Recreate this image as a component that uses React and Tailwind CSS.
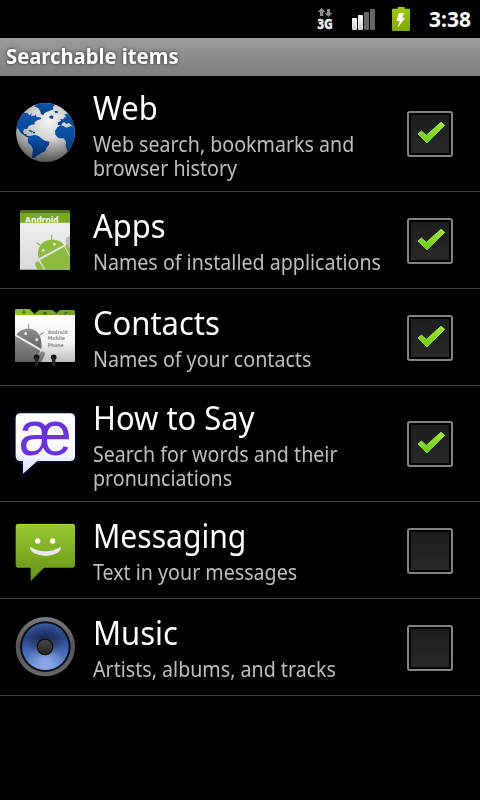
import React from "react";

function Network() {
  return (
    <svg className="h-[38px] w-[30px]" viewBox="30 0 90 114">
      <path d="M65 24 77 36H70V48H60V36H53Z" fill="#8e8e8e" />
      <path d="M81 27H90V39H97L85 51 74 39H81Z" fill="#8e8e8e" />
      <text x="52" y="87" fontSize="41" fontWeight="700" fill="#f2f2f2" stroke="#f2f2f2" strokeWidth="1.500" textLength="46" lengthAdjust="spacingAndGlyphs" className="font-['DejaVu_Sans',sans-serif]">3G</text>
    </svg>
  );
}

function Signal() {
  return (
    <svg className="h-[38px] w-[34px]" viewBox="138 0 102 114">
      <defs>
        <linearGradient id="bar" x1="0" y1="0" x2="0" y2="1">
          <stop offset="0" stopColor="#ffffff" />
          <stop offset="1" stopColor="#c9c9c9" />
        </linearGradient>
      </defs>
      <rect x="156" y="54" width="15" height="36" rx="2" fill="url(#bar)" />
      <rect x="174" y="45" width="15" height="45" rx="2" fill="url(#bar)" />
      <rect x="192" y="36" width="15" height="54" rx="2" fill="#666" />
      <rect x="210" y="27" width="15" height="63" rx="2" fill="#666" />
    </svg>
  );
}

function Battery() {
  return (
    <svg className="h-[38px] w-[26px]" viewBox="264 0 78 114">
      <defs>
        <linearGradient id="bat" x1="0" y1="0" x2="0" y2="1">
          <stop offset="0" stopColor="#a0cc00" />
          <stop offset="1" stopColor="#7ea600" />
        </linearGradient>
      </defs>
      <path d="M279 26H293V21H314V26H327Q330 26 330 29V90Q330 93 327 93H279Q276 93 276 90V29Q276 26 279 26Z" fill="url(#bat)" />
      <path d="M297 39H312L307 53H316L293 83 299 63H289Z" fill="#fff" />
    </svg>
  );
}

function Globe() {
  return (
    <svg className="h-[72px] w-[72px]" viewBox="27 21 216 216">
      <defs>
        <radialGradient id="sea" cx="0.56" cy="0.32" r="0.68">
          <stop offset="0" stopColor="#f4f4f4" />
          <stop offset="0.45" stopColor="#d2d2d2" />
          <stop offset="0.8" stopColor="#a4a4a4" />
          <stop offset="1" stopColor="#858585" />
        </radialGradient>
        <linearGradient id="land" x1="0" y1="0" x2="0" y2="1">
          <stop offset="0" stopColor="#0b55ad" />
          <stop offset="1" stopColor="#043f87" />
        </linearGradient>
        <linearGradient id="globeShade" x1="0" y1="0" x2="0" y2="1">
          <stop offset="0.6" stopColor="#000" stopOpacity="0" />
          <stop offset="1" stopColor="#000" stopOpacity="0.35" />
        </linearGradient>
        <clipPath id="disc"><circle cx="136.500" cy="127.500" r="88.500" /></clipPath>
      </defs>
      <circle cx="136.500" cy="127.500" r="88.500" fill="url(#sea)" />
      <g clipPath="url(#disc)" fill="url(#land)">
        <path d="M102 49 112 42 128 38H155L165 45 158 52 161 58 145 64 135 68 129 76 123 72 120 62 115 55Z" />
        <path d="M64 79 72 68 82 69 89 76 96 68 93 78 104 77 107 73 110 81 121 82 124 87 112 91 103 97 105 103 94 104 86 109 81 118 73 116 69 122 72 132 79 132 80 137 90 138 92 145 84 143 75 138 63 130 54 115 45 120V95Z" />
        <path d="M84 120 93 121 99 125 96 128 88 124ZM99 125H105V130H99Z" />
        <path d="M92 137 106 134 117 139 127 148 135 152 148 155 147 164 139 174 136 184 124 189 117 194 109 199 104 205 96 204 97 192 99 178 94 169 84 158 83 147Z" />
        <path d="M148 79 156 76 161 81 157 87 149 85ZM163 63 173 63 175 68 166 70Z" />
        <path d="M193 73 203 71 230 95V120L213 104 207 98 200 102 192 96 187 100 183 107 173 104 174 97 183 93 181 87 190 88 193 82 199 82Z" />
        <path d="M173 110 186 106 200 113 213 108 230 115V160L211 181 202 183 197 168 198 155 191 145H176L166 134 165 123Z" />
      </g>
      <circle cx="136.500" cy="127.500" r="88.500" fill="url(#globeShade)" />
    </svg>
  );
}

function AppsIcon() {
  return (
    <svg className="h-[72px] w-[72px]" viewBox="27 27 216 216">
      <defs>
        <linearGradient id="paper" x1="0" y1="0" x2="0" y2="1">
          <stop offset="0" stopColor="#f7f7f7" />
          <stop offset="1" stopColor="#d9d9d9" />
        </linearGradient>
        <clipPath id="pkg"><rect x="60" y="45" width="150" height="179" /></clipPath>
        <clipPath id="labelBand"><rect x="60" y="45" width="150" height="37" /></clipPath>
      </defs>
      <path d="M60 51 66 45H204L210 51V224H60Z" fill="url(#paper)" />
      <path d="M60 51 66 45H204L210 51V83H60Z" fill="#79aa1e" />
      <path d="M60 51 66 45H204L210 51V54H60Z" fill="#4c7513" />
      <g clipPath="url(#labelBand)">
        <text x="75" y="85" fontSize="27" fontWeight="700" fill="#fff" textLength="101" lengthAdjust="spacingAndGlyphs" className="font-['Noto_Sans',sans-serif]">Android</text>
      </g>
      <g clipPath="url(#pkg)">
        <path d="M210 124Q195 126 196 141 199 151 210 154Z" fill="#bcbcbc" />
        <g stroke="#8dbb3d" strokeWidth="3.500" strokeLinecap="round">
          <path d="M155 121V138M111 144 123 152" />
        </g>
        <path d="M116 190C108 163 124 136 150 135 169 133 182 138 192 149Z" fill="#8dbb3d" />
        <path d="M120 196 193 155 212 190V224H137Z" fill="#8dbb3d" />
        <path d="M195 153Q201 145 207 153L214 166V190Z" fill="#8dbb3d" />
        <path d="M106 210C103 201 113 196 119 203L132 224H112Z" fill="#8dbb3d" />
        <circle cx="130" cy="166" r="3.500" fill="#fff" />
        <circle cx="163" cy="148" r="3.500" fill="#fff" />
      </g>
    </svg>
  );
}

function ContactsIcon() {
  return (
    <svg className="h-[72px] w-[72px]" viewBox="27 18 216 216">
      <defs>
        <linearGradient id="card" x1="0" y1="0" x2="0" y2="1">
          <stop offset="0" stopColor="#ffffff" />
          <stop offset="0.6" stopColor="#f2f2f2" />
          <stop offset="1" stopColor="#bdbdbd" />
        </linearGradient>
        <linearGradient id="droid" x1="0" y1="0" x2="0" y2="1">
          <stop offset="0" stopColor="#8f8f8f" />
          <stop offset="1" stopColor="#626262" />
        </linearGradient>
        <clipPath id="cardClip"><rect x="45" y="60" width="180" height="141" rx="3" /></clipPath>
        <clipPath id="tabs"><rect x="45" y="40" width="180" height="21" /></clipPath>
      </defs>
      <path d="M106 55 117 45H158L169 55 180 45H222L225 48V62H100Z" fill="#78a51f" />
      <path d="M45 45Q45 42 48 42H88L101 55 106 61H45Z" fill="#8fc12c" />
      <g clipPath="url(#tabs)" fill="#29400a" fontSize="15" fontWeight="700" className="font-['Liberation_Sans',sans-serif]">
        <text x="66" y="56">A</text>
        <text x="130" y="62">B</text>
        <text x="193" y="62">C</text>
      </g>
      <path d="M45 60H225V198Q225 201 222 201H48Q45 201 45 198Z" fill="url(#card)" />
      <g clipPath="url(#cardClip)">
        <path d="M86 88V104M119 121 130 113" stroke="#949494" strokeWidth="3.500" strokeLinecap="round" />
        <path d="M50 119C57 106 75 98 97 103 116 108 128 132 124 162Z" fill="url(#droid)" />
        <path d="M45 123 121 167 107 201H45Z" fill="url(#droid)" />
        <path d="M118 176Q124 165 132 170 138 175 131 187L122 204H106Z" fill="url(#droid)" />
        <circle cx="77" cy="116" r="4" fill="#fff" />
        <circle cx="110" cy="134" r="4" fill="#fff" />
      </g>
      <g fill="#909090" fontSize="15" fontWeight="700" className="font-['DejaVu_Sans',sans-serif]">
        <text x="143" y="116" textLength="60" lengthAdjust="spacingAndGlyphs">Android</text>
        <text x="143" y="136" textLength="52" lengthAdjust="spacingAndGlyphs">Mobile</text>
        <text x="143" y="155" textLength="48" lengthAdjust="spacingAndGlyphs">Phone</text>
      </g>
      <g fill="#111">
        <circle cx="110" cy="187" r="8.500" />
        <circle cx="161" cy="187" r="8.500" />
        <rect x="105" y="187" width="10" height="25" rx="3" fill="#242424" />
        <rect x="156" y="187" width="10" height="25" rx="3" fill="#242424" />
      </g>
    </svg>
  );
}

function SayIcon() {
  return (
    <svg className="h-[72px] w-[72px] overflow-visible" viewBox="27 21 216 216">
      <defs>
        <linearGradient id="say" x1="0" y1="0" x2="0" y2="1">
          <stop offset="0" stopColor="#ffffff" />
          <stop offset="0.6" stopColor="#fbfbff" />
          <stop offset="1" stopColor="#d5dcfa" />
        </linearGradient>
        <filter id="glow" x="-20%" y="-20%" width="140%" height="140%"><feGaussianBlur stdDeviation="7" /></filter>
      </defs>
      <path d="M62 40H210Q225 40 225 55V168Q225 183 210 183H112L69 221V183H62Q47 183 47 168V55Q47 40 62 40Z" fill="#2a2aa0" opacity="0.7" filter="url(#glow)" />
      <path d="M62 40H210Q225 40 225 55V168Q225 183 210 183H112L69 221V183H62Q47 183 47 168V55Q47 40 62 40Z" fill="url(#say)" />
      <text transform="translate(57 164) scale(0.935 1)" fontSize="190" fill="#6a32e0" className="font-['Liberation_Sans',sans-serif]">æ</text>
    </svg>
  );
}

function MessagingIcon() {
  return (
    <svg className="h-[72px] w-[72px]" viewBox="27 12 216 216">
      <defs>
        <linearGradient id="msg" x1="0" y1="0" x2="0" y2="1">
          <stop offset="0" stopColor="#99c82f" />
          <stop offset="0.75" stopColor="#70a01c" />
          <stop offset="1" stopColor="#608c16" />
        </linearGradient>
      </defs>
      <path d="M54 42H218Q225 42 225 49V166Q225 173 218 173H132L92 214V173H54Q47 173 47 166V49Q47 42 54 42Z" fill="url(#msg)" />
      <path d="M54 43H218Q224 43 224 50" fill="none" stroke="#b5dc5a" strokeWidth="2" />
      <circle cx="113" cy="93" r="8" fill="#fff" />
      <circle cx="158" cy="93" r="8" fill="#fff" />
      <path d="M90 110Q136 137 183 110 184 121 170 130 137 146 103 130 88 120 90 110Z" fill="#e9e9ee" />
    </svg>
  );
}

function MusicIcon() {
  return (
    <svg className="h-[72px] w-[72px]" viewBox="27 18 216 216">
      <defs>
        <linearGradient id="rim" x1="0" y1="0" x2="0" y2="1">
          <stop offset="0" stopColor="#7a7a7a" />
          <stop offset="0.5" stopColor="#555555" />
          <stop offset="1" stopColor="#686868" />
        </linearGradient>
        <linearGradient id="cone" x1="0" y1="0" x2="0" y2="1">
          <stop offset="0" stopColor="#3c62ae" />
          <stop offset="0.3" stopColor="#28437f" />
          <stop offset="0.6" stopColor="#4468b0" />
          <stop offset="1" stopColor="#7294dc" />
        </linearGradient>
        <radialGradient id="coneTop" cx="0.5" cy="0.36" r="0.4">
          <stop offset="0" stopColor="#101d40" stopOpacity="0.75" />
          <stop offset="1" stopColor="#101d40" stopOpacity="0" />
        </radialGradient>
        <radialGradient id="coneGlow" cx="0.5" cy="0.82" r="0.4">
          <stop offset="0" stopColor="#a7c0f3" stopOpacity="0.7" />
          <stop offset="1" stopColor="#a7c0f3" stopOpacity="0" />
        </radialGradient>
        <linearGradient id="cap" x1="0" y1="0" x2="0" y2="1">
          <stop offset="0" stopColor="#484848" />
          <stop offset="1" stopColor="#242424" />
        </linearGradient>
      </defs>
      <circle cx="136" cy="125" r="89" fill="url(#rim)" />
      <circle cx="136" cy="125" r="76" fill="#0b0f1a" />
      <circle cx="136" cy="125" r="70" fill="url(#cone)" />
      <circle cx="136" cy="125" r="70" fill="url(#coneTop)" />
      <circle cx="136" cy="125" r="70" fill="url(#coneGlow)" />
      <circle cx="135" cy="126" r="25" fill="#0e0e10" />
      <circle cx="135" cy="126" r="21.500" fill="url(#cap)" />
    </svg>
  );
}

function Checkbox({ checked }) {
  return (
    <svg className="h-[46px] w-[46px]" viewBox="37 33 138 138" role="checkbox" aria-checked={checked}>
      <defs>
        <linearGradient id="boxFill" x1="0" y1="0" x2="0" y2="1">
          <stop offset="0" stopColor="#1d1d1d" />
          <stop offset="1" stopColor="#282828" />
        </linearGradient>
        <linearGradient id="tick" x1="0" y1="0" x2="0" y2="1">
          <stop offset="0" stopColor="#a4e83a" />
          <stop offset="1" stopColor="#6ccb10" />
        </linearGradient>
      </defs>
      <rect x="40" y="36" width="132" height="132" rx="5" fill="#000" stroke="#828282" strokeWidth="6" />
      <rect x="49" y="45" width="114" height="114" fill="url(#boxFill)" />
      {checked && <path d="M70 102 80 93 95 106 139 67 150 76 97 129Z" fill="url(#tick)" stroke="url(#tick)" strokeWidth="3" strokeLinejoin="round" />}
    </svg>
  );
}

const items = [
  { title: "Web", lines: ["Web search, bookmarks and", "browser history"], Icon: Globe, checked: true },
  { title: "Apps", lines: ["Names of installed applications"], Icon: AppsIcon, checked: true },
  { title: "Contacts", lines: ["Names of your contacts"], Icon: ContactsIcon, checked: true },
  { title: "How to Say", lines: ["Search for words and their", "pronunciations"], Icon: SayIcon, checked: true },
  { title: "Messaging", lines: ["Text in your messages"], Icon: MessagingIcon, checked: false, titleScale: "scale-x-[0.912]" },
  { title: "Music", lines: ["Artists, albums, and tracks"], Icon: MusicIcon, checked: false },
];

function Row({ title, lines, Icon, checked, titleScale = "scale-x-[0.938]" }) {
  const tall = lines.length > 1;
  return (
    <li className={`flex items-start border-b border-[#404040] pl-[9px] ${tall ? "h-[116px]" : "h-[97px]"}`}>
      <div className={`shrink-0 ${tall ? "pt-[21px]" : "pt-3"}`}><Icon /></div>
      <div className={`w-[326px] shrink-0 pl-3 whitespace-nowrap ${tall ? "pt-3" : "pt-[14px]"}`}>
        <div className={`origin-left text-[33px] leading-[40px] text-white ${titleScale}`}>{title}</div>
        <div className="mt-1 origin-left scale-x-[0.935] text-[21px] leading-6 text-[#bebebe]">
          {lines.map((l) => <div key={l}>{l}</div>)}
        </div>
      </div>
      <div className={tall ? "pt-[35px]" : "pt-[26px]"}><Checkbox checked={checked} /></div>
    </li>
  );
}

export default function App() {
  return (
    <div className="h-[800px] w-[480px] overflow-hidden bg-black font-['Noto_Sans',sans-serif]">
      <div className="flex h-[38px] pl-[310px]">
        <Network />
        <div className="ml-[6px]"><Signal /></div>
        <div className="ml-[8px]"><Battery /></div>
        <div className="ml-[15px] text-[21px] leading-[38px] font-bold text-white">3:38</div>
      </div>
      <div className="h-[38px] bg-linear-to-b from-[#9c9c9c] to-[#7e7e7e] pl-[6px]">
        <h1 className="origin-left scale-x-[0.963] text-[21px] leading-[37px] font-bold whitespace-nowrap text-white [text-shadow:0_0_4px_rgba(0,0,0,0.7)]">Searchable items</h1>
      </div>
      <ul>
        {items.map((it) => <Row key={it.title} {...it} />)}
      </ul>
    </div>
  );
}
